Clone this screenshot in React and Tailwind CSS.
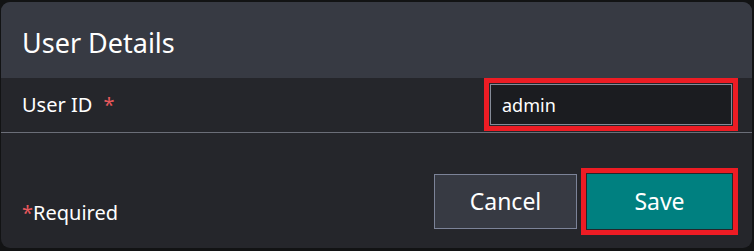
export default function App() {
  const font = { fontFamily: '"Noto Sans", "Open Sans", sans-serif' };
  return (
    <div className="w-[754px] h-[251px] bg-[#121314] pl-[1px] pt-[2px] overflow-hidden" style={font}>
      <div className="w-[751px] h-[246px] rounded-[9px] bg-[#25262b] overflow-hidden flex flex-col">
        <div className="h-[76px] shrink-0 bg-[#373a43] flex items-center px-[21px]">
          <span className="text-[27px] text-white leading-none mt-[5px]">User Details</span>
        </div>
        <div className="h-[56px] shrink-0 flex items-center justify-between pl-[21px] pr-[14px] border-b border-[#6b6e78] -mt-[1px]">
          <div className="text-[20px] text-white leading-none">
            User ID <span className="text-[#e8585c] ml-[6px]">*</span>
          </div>
          <div className="border-[5px] border-[#ed1c24] p-[1px]">
            <input
              readOnly
              value="admin"
              className="w-[242px] h-[41px] bg-[#1b1c20] border border-[#858b98] px-[11px] text-[18px] text-white outline-none"
              style={font}
            />
          </div>
        </div>
        <div className="flex-1 flex items-end justify-between pl-[21px] pr-[14px] pb-[13px]">
          <div className="text-[20px] text-white leading-none mb-[12px]">
            <span className="text-[#e8585c]">*</span>Required
          </div>
          <div className="flex items-center gap-[4px]">
            <button className="w-[143px] h-[55px] bg-[#373a43] border border-[#7c8398] text-[23px] text-white" style={font}>
              Cancel
            </button>
            <div className="border-[5px] border-[#ed1c24] p-[1px]">
              <button className="w-[145px] h-[55px] bg-[#008080] text-[23px] text-white" style={font}>
                Save
              </button>
            </div>
          </div>
        </div>
      </div>
    </div>
  );
}
